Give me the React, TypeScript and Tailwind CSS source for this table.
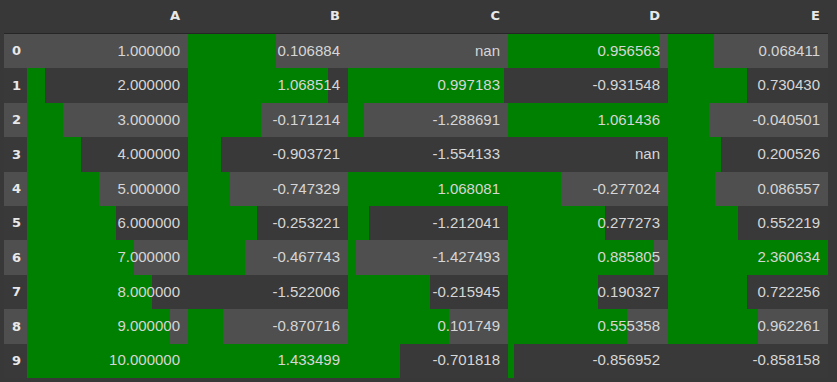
const columns = ['A', 'B', 'C', 'D', 'E'];

const NAN = Number.NaN;

// rows of the styled frame, one array per column
const data: Record<string, number[]> = {
  A: [1, 2, 3, 4, 5, 6, 7, 8, 9, 10],
  B: [0.106884, 1.068514, -0.171214, -0.903721, -0.747329, -0.253221, -0.467743, -1.522006, -0.870716, 1.433499],
  C: [NAN, 0.997183, -1.288691, -1.554133, 1.068081, -1.212041, -1.427493, -0.215945, 0.101749, -0.701818],
  D: [0.956563, -0.931548, 1.061436, NAN, -0.277024, 0.277273, 0.885805, 0.190327, 0.555358, -0.856952],
  E: [0.068411, 0.73043, -0.040501, 0.200526, 0.086557, 0.552219, 2.360634, 0.722256, 0.962261, -0.858158],
};

// min / max per column, nan skipped
const ranges = Object.fromEntries(
  columns.map((c) => {
    const vals = data[c].filter((v) => !Number.isNaN(v));
    return [c, { min: Math.min(...vals), max: Math.max(...vals) }];
  })
);

function barStyle(col: string, v: number) {
  if (Number.isNaN(v)) return undefined;
  const { min, max } = ranges[col];
  const pct = ((v - min) / (max - min)) * 100;
  if (pct <= 0) return undefined;
  return { background: `linear-gradient(90deg, #008000 ${pct.toFixed(2)}%, transparent ${pct.toFixed(2)}%)` };
}

function fmt(v: number) {
  return Number.isNaN(v) ? 'nan' : v.toFixed(6);
}

export default function App() {
  return (
    <div className="min-h-screen bg-[#383838] pl-[4px] font-['Liberation_Sans',Arial,sans-serif] text-[15px] text-[#d6d6d6]">
      {/* header */}
      <div className="flex h-[34px] border-b border-[#262626] w-[824px] font-['DejaVu_Sans',sans-serif] text-[13px]">
        <div className="w-[23px]" />
        {columns.map((c, i) => (
          <div
            key={c}
            className={`${i === 0 ? 'w-[161px]' : 'w-[160px]'} flex items-center justify-end pr-[8px] pb-[2px] font-bold text-[#e8e8e8]`}
          >
            {c}
          </div>
        ))}
      </div>

      {/* body */}
      {data.A.map((_, r) => (
        <div key={r} className={`flex h-[34.4px] w-[824px] ${r % 2 === 0 ? 'bg-[#4f4f4f]' : 'bg-[#393939]'}`}>
          <div className="w-[23px] flex items-center pl-[8px] font-bold text-[#e8e8e8] font-['DejaVu_Sans',sans-serif] text-[13px]">
            {r}
          </div>
          {columns.map((c, i) => (
            <div
              key={c}
              style={barStyle(c, data[c][r])}
              className={`${i === 0 ? 'w-[161px]' : 'w-[160px]'} flex items-center justify-end pr-[8px]`}
            >
              {fmt(data[c][r])}
            </div>
          ))}
        </div>
      ))}
    </div>
  );
}
